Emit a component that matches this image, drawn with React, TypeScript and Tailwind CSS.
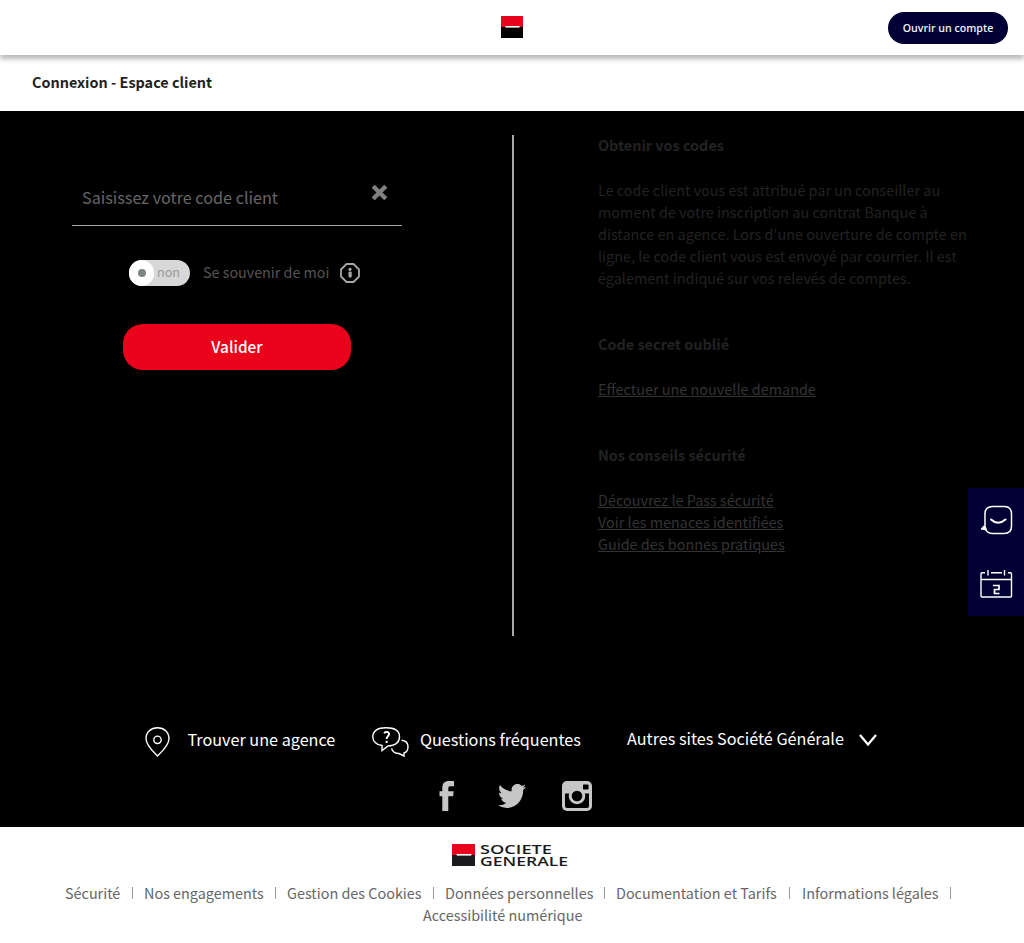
import React from 'react';

const adviceLinks = ['Découvrez le Pass sécurité', 'Voir les menaces identifiées', 'Guide des bonnes pratiques'];

function Emblem({ className, dark }: { className: string; dark: string }) {
  return (
    <svg viewBox="0 0 22 22" className={className} preserveAspectRatio="none" aria-hidden="true">
      <rect width="22" height="11" fill="#e9041e" />
      <rect y="11" width="22" height="11" fill={dark} />
      <rect x="4.5" y="10" width="14" height="1.6" fill="#fff" />
    </svg>
  );
}

function Header() {
  return (
    <header className="relative z-10 flex h-[55px] items-center justify-between bg-white px-4 shadow-[0_4px_5px_rgba(0,0,0,0.28)]">
      <span className="w-[120px]" />
      <Emblem className="mb-px h-[22px] w-[22px]" dark="#000" />
      <button className="mt-px h-8 w-[120px] rounded-full bg-[#010035] pt-px font-['Open_Sans',sans-serif] text-[10.6px] font-semibold text-[#f2f2f8]">
        Ouvrir un compte
      </button>
    </header>
  );
}

function LoginForm() {
  return (
    <section className="flex w-[512px] flex-col pl-[72px] pt-6">
      <div className="mt-[30px] flex h-[61px] w-[330px] justify-between border-b border-[#aaa] pl-[10px] pr-[14px]">
        <span className="pt-[19px] text-[16.2px] leading-[26px] text-[#666]">Saisissez votre code client</span>
        <svg width="17" height="17" viewBox="0 0 17 17" className="mt-[19px]" aria-hidden="true">
          <path d="M2.2 2.2 14.8 14.8M14.8 2.2 2.2 14.8" stroke="#808080" strokeWidth="4.4" />
        </svg>
      </div>
      <div className="ml-[57px] mt-[34px] flex h-[26px] items-center">
        <div className="flex h-[26px] w-[61px] items-center rounded-full bg-[#d8d8d8]">
          <span className="flex h-[26px] w-[25px] items-center justify-center rounded-full bg-white">
            <span className="h-2 w-2 rounded-full bg-[#7c8582]" />
          </span>
          <span className="-mt-[2px] ml-[3px] text-[12.6px] leading-[24px] text-[#999]">non</span>
        </div>
        <span className="-mt-[2px] ml-[13px] w-[137px] text-[14.33px] leading-[24px] text-[#555]">Se souvenir de moi</span>
        <svg width="20" height="20" viewBox="0 0 20 20" fill="none" aria-hidden="true">
          <path d="M6.5 1h7L19 6.500v7L13.500 19h-7L1 13.500v-7Z" stroke="#a8a8a8" strokeWidth="1.800" strokeLinejoin="round" />
          <rect x="8.500" y="8.500" width="3.200" height="6" rx="1" fill="#a8a8a8" />
          <circle cx="10" cy="6.300" r="1.600" fill="#a8a8a8" />
        </svg>
      </div>
      <button className="ml-[51px] mt-[38px] h-[46px] w-[228px] rounded-[20px] bg-[#eb021b] pb-px text-[15.4px] font-medium leading-[45px] text-white">
        Valider
      </button>
    </section>
  );
}

function Help() {
  return (
    <section className="flex w-[376px] flex-col text-[14.43px] leading-[22px] text-[#222]">
      <h2 className="font-bold">Obtenir vos codes</h2>
      <p className="mt-[23px] whitespace-nowrap">
        Le code client vous est attribué par un conseiller au<br />
        moment de votre inscription au contrat Banque à<br />
        distance en agence. Lors d'une ouverture de compte en<br />
        ligne, le code client vous est envoyé par courrier. Il est<br />
        également indiqué sur vos relevés de comptes.
      </p>
      <h2 className="mt-11 font-bold">Code secret oublié</h2>
      <a className="mt-[23px] text-[#333] underline">Effectuer une nouvelle demande</a>
      <h2 className="mt-11 font-bold">Nos conseils sécurité</h2>
      <div className="mt-[23px] flex flex-col text-[#333]">
        {adviceLinks.map((l) => <a key={l} className="underline">{l}</a>)}
      </div>
    </section>
  );
}

function SideTools() {
  return (
    <aside className="absolute left-[968px] top-[488px] flex h-32 w-14 flex-col bg-[#010035]">
      <svg width="56" height="64" viewBox="0 0 56 64" fill="none" stroke="#fff" strokeWidth="1.500" aria-hidden="true">
        <path d="M17 37V26Q17 18.500 25 18.500H36Q43.500 18.500 43.500 26V38Q43.500 45.500 36 45.500H25Q19 45.500 17.500 41" />
        <path d="M17.200 36.500 13 41 19 42" fill="#fff" strokeWidth="1" />
        <path d="M23 31.500Q30 38 37.500 31.500" strokeWidth="2" strokeLinecap="round" />
      </svg>
      <svg width="56" height="64" viewBox="0 0 56 64" fill="none" stroke="#fff" strokeWidth="1.400" aria-hidden="true">
        <path d="M17 20.700H14Q13 20.700 13 22V44Q13 45 14 45H42.500Q43.500 45 43.500 44V22Q43.500 20.700 42.500 20.700H40M23 20.700H34M13 27.500H43.500M20 18V23.500M36.500 18V23.500" />
        <path d="M25 33.500H31V37.500H26.500V41.500H31.500" strokeWidth="1.700" />
      </svg>
    </aside>
  );
}

function QuickLinks() {
  return (
    <nav className="flex h-10 items-start text-[16.22px] leading-[26px] text-white">
      <a className="ml-[145px] flex w-[227px]">
        <svg width="25" height="31" viewBox="0 0 25 31" fill="none" stroke="#fff" strokeWidth="1.400" className="mt-[1px]" aria-hidden="true">
          <path d="M12.500 29C9 25.500 1 18.500 1 11.500C1 5 6 .8 12.500 .8S24 5 24 11.500C24 18.500 16 25.500 12.500 29Z" />
          <circle cx="12.500" cy="12.800" r="3.700" />
        </svg>
        <span className="ml-[17.5px]">Trouver une agence</span>
      </a>
      <a className="flex w-[255px]">
        <svg width="38" height="31" viewBox="0 0 38 31" fill="none" stroke="#fff" strokeWidth="1.400" className="mt-[1px]" aria-hidden="true">
          <path d="M10 18.500C4 18 .8 14 .8 9.700C.8 4 5.500 .8 14 .8S27.500 4 27.500 9.700S23 18.500 16 19L10 23.500Z" />
          <path d="M29.500 13.200C34 13.500 36 16.500 36 20C36 23 35 25 32 26V29L27 26.500C23 26.500 20.500 24.500 19.500 21.500" />
          <path d="M12.300 6.500C12.600 4.300 17.200 4.300 17 7.200C17 9 14.600 9.400 14.600 12M14.600 13.800V16" strokeWidth="1.900" />
        </svg>
        <span className="ml-[10px]">Questions fréquentes</span>
      </a>
      <a className="-mt-px flex">
        <span className="w-[232px]">Autres sites Société Générale</span>
        <svg width="18" height="13" viewBox="0 0 18 13" fill="none" stroke="#fff" strokeWidth="2.200" className="mt-[9px]" aria-hidden="true">
          <path d="M1 1 9 10.500 17 1" />
        </svg>
      </a>
    </nav>
  );
}

function Social() {
  return (
    <div className="mt-[15px] flex h-[30px] items-center pl-[439px]">
      <svg width="15" height="30" viewBox="0 0 15 30" fill="#c6c6c6" aria-hidden="true">
        <path d="M3.300 30V15.300H.5V10.200H3.300V7C3.300 2 5.800 0 9.800 0H15V5.200H11.500C9.800 5.200 9.300 6 9.300 7.300V10.200H14.700L14.100 15.300H9.300V30Z" />
      </svg>
      <svg width="28" height="24" viewBox="0 2.300 24 19.500" preserveAspectRatio="none" fill="#c6c6c6" className="ml-11" aria-hidden="true">
        <path d="M23.950 4.570a10 10 0 0 1-2.820.77 4.960 4.960 0 0 0 2.160-2.720c-.95.560-2 .960-3.130 1.180a4.920 4.920 0 0 0-8.380 4.480C7.690 8.090 4.070 6.130 1.640 3.160a4.820 4.820 0 0 0-.67 2.480c0 1.710.87 3.210 2.190 4.100a4.900 4.900 0 0 1-2.230-.62v.06a4.920 4.920 0 0 0 3.950 4.830 5 5 0 0 1-2.210.08 4.940 4.940 0 0 0 4.600 3.420A9.870 9.870 0 0 1 0 19.540a13.990 13.990 0 0 0 7.550 2.210c9.050 0 14-7.500 14-13.980 0-.21 0-.42-.02-.63a9.940 9.940 0 0 0 2.460-2.550z" />
      </svg>
      <svg width="30" height="30" viewBox="0 0 30 30" className="ml-9" aria-hidden="true">
        <rect width="30" height="30" rx="5" fill="#c6c6c6" />
        <path d="M3 12.500H8V18H22V12.500H27V25Q27 27 25 27H5Q3 27 3 25Z" fill="#000" />
        <circle cx="15" cy="15" r="8.300" fill="#c6c6c6" />
        <circle cx="15" cy="15" r="5.300" fill="#000" />
        <rect x="21" y="3.500" width="5.500" height="5" rx=".7" fill="#000" />
      </svg>
    </div>
  );
}

function Legal() {
  return (
    <footer className="h-[116px] bg-white pt-[17px] text-[14.4px] leading-[22px] text-[#666]">
      <div className="ml-[452px] flex h-[22px]">
        <Emblem className="h-[22px] w-[23px]" dark="#1b1b1d" />
        <svg width="90" height="24" viewBox="0 0 90 24" className="ml-[5px] overflow-visible" fill="#1b1b1d" fontFamily="Open Sans, sans-serif" fontWeight="600" fontSize="12.700">
          <text x="0" y="9.500" textLength="72" lengthAdjust="spacingAndGlyphs">SOCIETE</text>
          <text x="0" y="22" textLength="88" lengthAdjust="spacingAndGlyphs">GENERALE</text>
        </svg>
      </div>
      <div className="mt-[16px] flex whitespace-nowrap pl-[65px]">
        <LegalItem label="Sécurité" width="w-[79px]" bar="w-[68px]" />
        <LegalItem label="Nos engagements" width="w-[143px]" bar="w-[132px]" />
        <LegalItem label="Gestion des Cookies" width="w-[158px]" bar="w-[147px]" />
        <LegalItem label="Données personnelles" width="w-[171px]" bar="w-[160px]" />
        <LegalItem label="Documentation et Tarifs" width="w-[186px]" bar="w-[174px]" />
        <LegalItem label="Informations légales" width="w-[150px]" bar="w-[149px]" />
      </div>
      <div className="pl-[423px]">Accessibilité numérique</div>
    </footer>
  );
}

function LegalItem({ label, width, bar }: { label: string; width: string; bar: string }) {
  return (
    <span className={`${width} shrink-0`}>
      <span className={`${bar} flex items-center justify-between`}>
        <a>{label}</a>
        <span className="h-3 w-px bg-[#999]" />
      </span>
    </span>
  );
}

export default function App() {
  return (
    <div className="relative h-[943px] w-[1024px] overflow-hidden bg-black font-['Noto_Sans_CJK_SC',sans-serif]">
      <Header />
      <div className="h-14 bg-white pl-8 pt-[16px] text-[14.4px] font-bold leading-[22px] text-[#222]">Connexion - Espace client</div>
      <main className="flex h-[616px] items-start">
        <LoginForm />
        <div className="mt-6 h-[501px] w-[2px] bg-[#aaa]" />
        <div className="ml-[84px] mt-[23px]"><Help /></div>
      </main>
      <div className="-mt-px h-[101px]">
        <QuickLinks />
        <Social />
      </div>
      <Legal />
      <SideTools />
    </div>
  );
}
